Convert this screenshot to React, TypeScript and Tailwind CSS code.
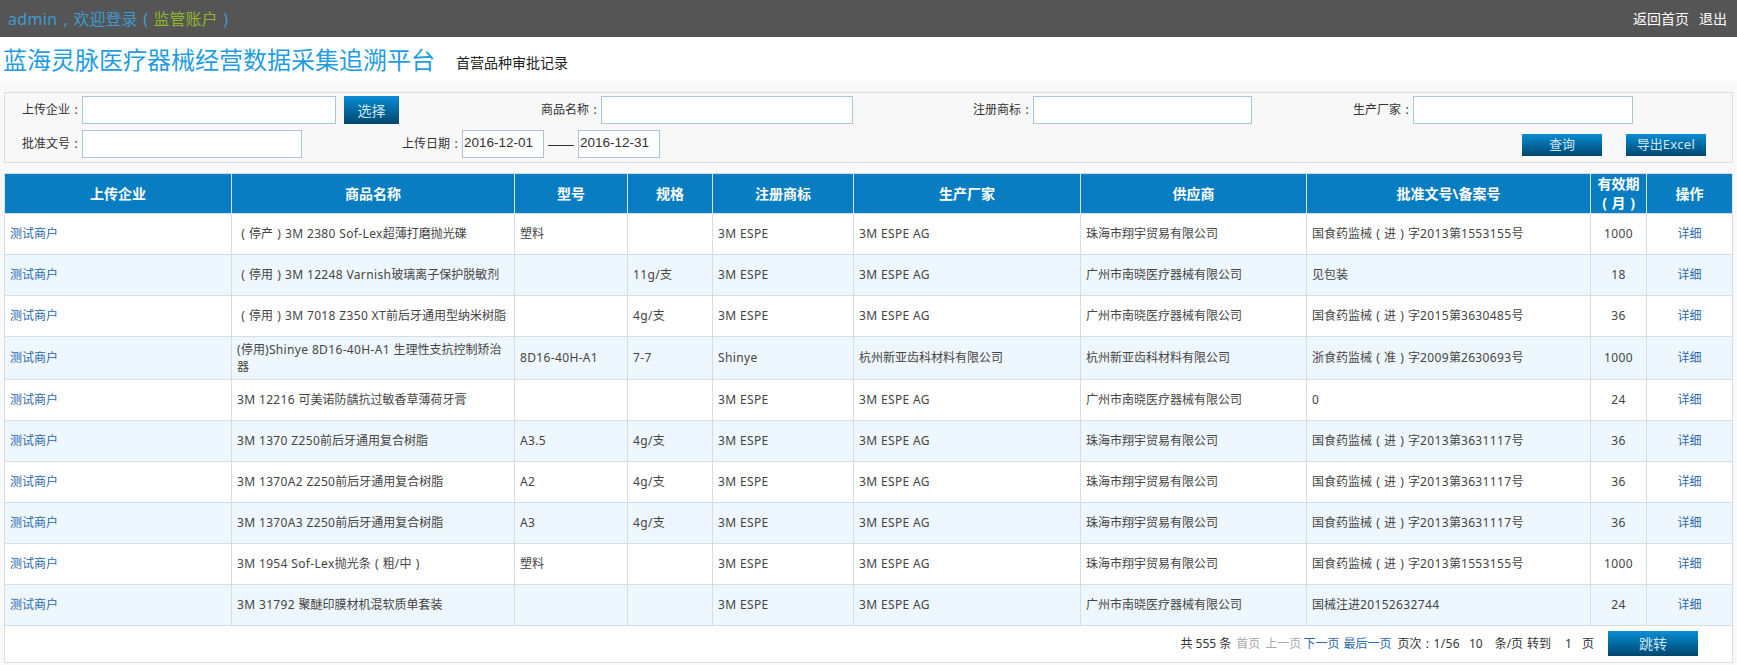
import type { ReactNode } from "react";

const NANXIAO = "广州市南晓医疗器械有限公司";
const XIANGYU = "珠海市翔宇贸易有限公司";
const ESPE = "3M ESPE";
const ESPE_AG = "3M ESPE AG";

// 商品名称, 型号, 规格, 注册商标, 生产厂家, 供应商, 批准文号, 有效期
const ROWS: string[][] = [
  ["（停产）3M 2380 Sof-Lex超薄打磨抛光碟", "塑料", "", ESPE, ESPE_AG, XIANGYU, "国食药监械（进）字2013第1553155号", "1000"],
  ["（停用）3M 12248 Varnish玻璃离子保护脱敏剂", "", "11g/支", ESPE, ESPE_AG, NANXIAO, "见包装", "18"],
  ["（停用）3M 7018 Z350 XT前后牙通用型纳米树脂", "", "4g/支", ESPE, ESPE_AG, NANXIAO, "国食药监械（进）字2015第3630485号", "36"],
  ["(停用)Shinye 8D16-40H-A1 生理性支抗控制矫治\n器", "8D16-40H-A1", "7-7", "Shinye", "杭州新亚齿科材料有限公司", "杭州新亚齿科材料有限公司", "浙食药监械（准）字2009第2630693号", "1000"],
  ["3M 12216 可美诺防龋抗过敏香草薄荷牙膏", "", "", ESPE, ESPE_AG, NANXIAO, "0", "24"],
  ["3M 1370 Z250前后牙通用复合树脂", "A3.5", "4g/支", ESPE, ESPE_AG, XIANGYU, "国食药监械（进）字2013第3631117号", "36"],
  ["3M 1370A2 Z250前后牙通用复合树脂", "A2", "4g/支", ESPE, ESPE_AG, XIANGYU, "国食药监械（进）字2013第3631117号", "36"],
  ["3M 1370A3 Z250前后牙通用复合树脂", "A3", "4g/支", ESPE, ESPE_AG, XIANGYU, "国食药监械（进）字2013第3631117号", "36"],
  ["3M 1954 Sof-Lex抛光条（粗/中）", "塑料", "", ESPE, ESPE_AG, XIANGYU, "国食药监械（进）字2013第1553155号", "1000"],
  ["3M 31792 聚醚印膜材机混软质单套装", "", "", ESPE, ESPE_AG, NANXIAO, "国械注进20152632744", "24"],
];

const COL_WIDTHS = ["w-[227px]", "w-[283px]", "w-[113px]", "w-[85px]", "w-[141px]", "w-[227px]", "w-[226px]", "w-[284px]", "w-[56px]", "w-[86px]"];
const HEADERS = ["上传企业", "商品名称", "型号", "规格", "注册商标", "生产厂家", "供应商", "批准文号\\备案号"];

const BLUE_BTN = "bg-gradient-to-b from-[#0a8ed6] to-[#00476f] text-[#cfe6f5]";

const CENTERED: Record<string, string> = { "（": "(", "）": ")", "：": ":", "，": "," };

// 拉丁字符比参考图略窄，单独加一点字距；全角标点在参考图里是居中的
function Mixed({ text }: { text: string }) {
  return (
    <>
      {text.split(/([\x20-\x7e]+|[（）：，])/).map((part, i) => {
        if (i % 2 === 0) return part;
        if (CENTERED[part]) {
          return (
            <span key={i} className="inline-block w-[1em] text-center">
              {CENTERED[part]}
            </span>
          );
        }
        return (
          <span key={i} className="tracking-[0.35px]">
            {part}
          </span>
        );
      })}
    </>
  );
}

function Label({ className, children }: { className: string; children: string }) {
  return (
    <span className={`shrink-0 text-right text-[12px] leading-[28px] text-[#333] ${className}`}>
      <Mixed text={`${children}：`} />
    </span>
  );
}

function Field({ className, value }: { className: string; value?: string }) {
  return (
    <div className={`h-[28px] shrink-0 border border-[#a9c6de] bg-white text-[13.5px] leading-[24px] pl-[1px] text-[#333] font-['Liberation_Sans',sans-serif] ${className}`}>
      {value}
    </div>
  );
}

function Pager({ children }: { children: ReactNode }) {
  return <div className="flex items-center justify-end h-[36px] pr-[34px] border-l border-[#dddddd] text-[#333]">{children}</div>;
}

export default function App() {
  return (
    <div className="w-[1737px] h-[665px] overflow-hidden bg-white font-['Noto_Sans','Noto_Sans_CJK_SC',sans-serif] text-[12px] text-[#444]">
      <div className="h-[37px] bg-[#555555] flex items-center justify-between pl-[8px] pr-[10px]">
        <div className="text-[16px] text-[#3f9ad0]">
          <Mixed text="admin，欢迎登录（" />
          <span className="text-[#8fb52c]">监管账户</span>
          <Mixed text="）" />
        </div>
        <div className="text-[14px] text-white flex gap-[10px]">
          <span>返回首页</span>
          <span>退出</span>
        </div>
      </div>

      <div className="h-[44px] flex items-center pl-[3px] pt-[1px]">
        <span className="text-[24px] text-[#1f9ce3] leading-none">蓝海灵脉医疗器械经营数据采集追溯平台</span>
        <span className="text-[14px] text-[#222] ml-[21px] mt-[6px]">首营品种审批记录</span>
      </div>

      <div className="h-[584px] bg-[#f9f9f9] pt-[11px] px-[4px]">
        <div className="w-[1729px] h-[71px] border border-[#dddddd] bg-[#f8f8f8] pt-[3px]">
          <div className="flex h-[28px]">
            <Label className="w-[77px]">上传企业</Label>
            <Field className="w-[254px]" />
            <button className={`ml-[8px] w-[55px] h-[28px] text-[14px] ${BLUE_BTN}`}>选择</button>
            <Label className="w-[202px]">商品名称</Label>
            <Field className="w-[252px]" />
            <Label className="w-[180px]">注册商标</Label>
            <Field className="w-[219px]" />
            <Label className="w-[161px]">生产厂家</Label>
            <Field className="w-[220px]" />
          </div>
          <div className="flex h-[28px] mt-[6px] items-start">
            <Label className="w-[77px]">批准文号</Label>
            <Field className="w-[220px]" />
            <Label className="w-[160px]">上传日期</Label>
            <Field className="w-[82px]" value="2016-12-01" />
            <span className="w-[34px] shrink-0 flex justify-center pt-[15px]">
              <span className="block w-[26px] h-px bg-[#333]" />
            </span>
            <Field className="w-[82px]" value="2016-12-31" />
            <button className={`ml-[862px] mt-[4px] w-[80px] h-[22px] text-[13px] ${BLUE_BTN}`}>查询</button>
            <button className={`ml-[24px] mt-[4px] w-[80px] h-[22px] text-[13px] ${BLUE_BTN}`}>
              导出<span className="tracking-[0.35px]">Excel</span>
            </button>
          </div>
        </div>

        <div className="mt-[10px] w-[1729px] h-[490px] border-y border-r border-[#dddddd] bg-white">
          <table className="table-fixed w-[1728px] border-collapse">
            <colgroup>
              {COL_WIDTHS.map((w, i) => (
                <col key={i} className={w} />
              ))}
            </colgroup>
            <thead>
              <tr className="h-[39px] bg-[#087dc2] text-white text-[14px] font-bold leading-[19px]">
                {HEADERS.map((h) => (
                  <th key={h} className="border-x border-[#d6e6f2] font-bold">
                    {h}
                  </th>
                ))}
                <th className="border-x border-[#d6e6f2] font-bold">
                  有效期
                  <br />
                  <Mixed text="（月）" />
                </th>
                <th className="border-x border-[#d6e6f2] font-bold">操作</th>
              </tr>
            </thead>
            <tbody>
              {ROWS.map((row, i) => (
                <tr key={i} className={`${i === 3 ? "h-[43px]" : "h-[41px]"} ${i % 2 === 1 ? "bg-[#eef7fd]" : "bg-white"}`}>
                  <td className="border border-[#d5dee6] pl-[5px] text-[#2a69ad]">测试商户</td>
                  {row.slice(0, 7).map((cell, j) => (
                    <td key={j} className="border border-[#d5dee6] px-[5px] leading-[17px]">
                      {cell.split("\n").map((line, k) => (
                        <div key={k}>
                          <Mixed text={line} />
                        </div>
                      ))}
                    </td>
                  ))}
                  <td className="border border-[#d5dee6] text-center">
                    <Mixed text={row[7]} />
                  </td>
                  <td className="border border-[#d5dee6] text-center text-[#2a69ad]">详细</td>
                </tr>
              ))}
            </tbody>
          </table>
          <Pager>
            <span>共 555 条</span>
            <span className="ml-[5px] text-[#aaaaaa]">首页</span>
            <span className="ml-[5px] text-[#aaaaaa]">上一页</span>
            <span className="ml-[2px] text-[#2a69ad]">下一页</span>
            <span className="ml-[4px] text-[#2a69ad]">最后一页</span>
            <span className="ml-[6px]">
              <Mixed text="页次：1/56" />
            </span>
            <span className="ml-[9px]">10</span>
            <span className="ml-[12px]">条/页</span>
            <span className="ml-[4px]">转到</span>
            <span className="ml-[14px]">1</span>
            <span className="ml-[10px]">页</span>
            <button className={`ml-[14px] w-[90px] h-[25px] text-[14px] ${BLUE_BTN}`}>跳转</button>
          </Pager>
        </div>
      </div>
    </div>
  );
}
